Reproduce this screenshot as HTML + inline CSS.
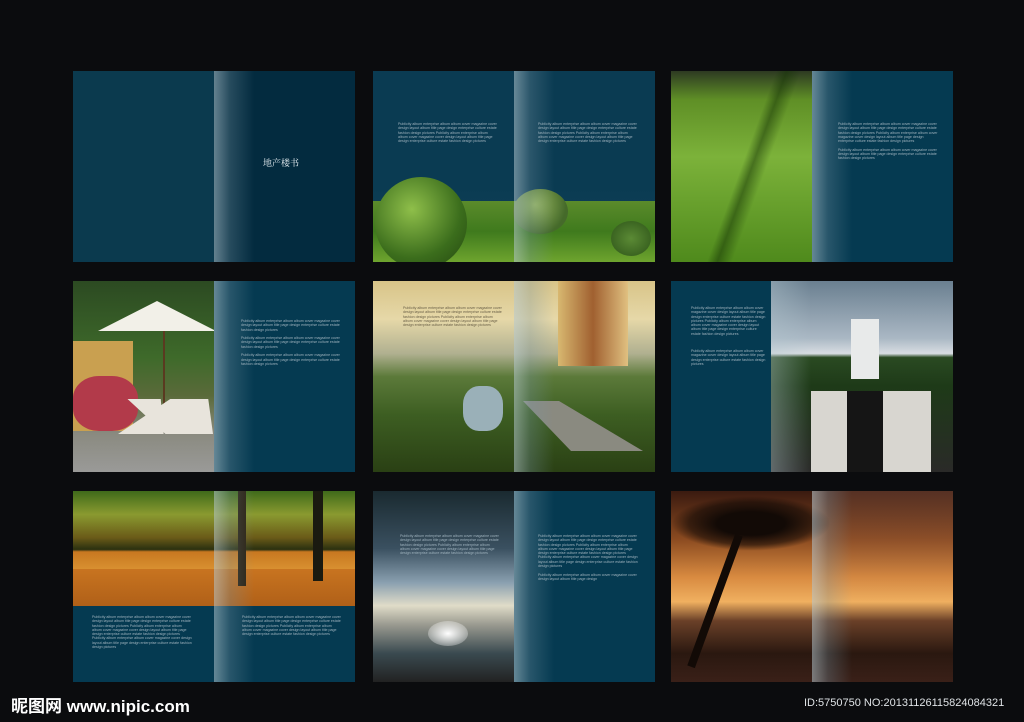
<!DOCTYPE html>
<html><head><meta charset="utf-8"><style>
body{margin:0;width:1024px;height:722px;background:#0b0c0e;position:relative;overflow:hidden;font-family:"Liberation Sans",sans-serif}
.s{position:absolute;width:282px;height:191px;overflow:hidden;background:#053047}
.a{position:absolute}
.fold{position:absolute;left:141px;top:0;width:40px;height:100%;background:linear-gradient(90deg,rgba(180,200,208,.55),rgba(120,150,165,.3) 40%,rgba(0,0,0,0))}
.t{position:absolute;font-size:3.6px;line-height:4.3px;color:#9fb2bd;width:100px;white-space:normal}
</style></head><body>

<!-- row 1 -->
<div class="s" style="left:73px;top:71px">
 <div class="a" style="left:0;top:0;width:141px;height:191px;background:#0b3a4e"></div>
 <div class="a" style="left:141px;top:0;width:141px;height:191px;background:#032b3f"></div>
 <div class="fold"></div>
 <div class="a" style="left:190px;top:85px;color:#e6eef2;font-size:9px;font-family:'Liberation Serif','Noto Serif CJK SC',serif">地产楼书</div>
</div>

<div class="s" style="left:373px;top:71px">
 <div class="a" style="left:0;top:0;width:282px;height:191px;background:linear-gradient(180deg,#0a3b52 0,#0a3b52 60%,#12405a 100%)"></div>
 <div class="a" style="left:0;top:130px;width:282px;height:61px;background:linear-gradient(180deg,#5b8b2b,#3f7a1d 50%,#6ea42e)"></div>
 <div class="a" style="left:2px;top:106px;width:92px;height:92px;border-radius:50%;background:radial-gradient(circle at 40% 35%,#8fbf4a,#3b6d1c 60%,#234510)"></div>
 <div class="a" style="left:140px;top:118px;width:55px;height:45px;border-radius:50%;background:radial-gradient(circle at 40% 35%,#9ab860,#456a2a 70%)"></div>
 <div class="a" style="left:238px;top:150px;width:40px;height:35px;border-radius:50%;background:radial-gradient(#5b8a35,#2d5418)"></div>
 <div class="fold"></div>
 <div class="t" style="left:25px;top:51px">Publicity album enterprise album album cover magazine cover design layout album title page design enterprise culture estate fashion design pictures Publicity album enterprise album album cover magazine cover design layout album title page design enterprise culture estate fashion design pictures</div>
 <div class="t" style="left:165px;top:51px">Publicity album enterprise album album cover magazine cover design layout album title page design enterprise culture estate fashion design pictures Publicity album enterprise album album cover magazine cover design layout album title page design enterprise culture estate fashion design pictures</div>
</div>

<div class="s" style="left:671px;top:71px">
 <div class="a" style="left:0;top:0;width:141px;height:191px;background:linear-gradient(180deg,#2d3a22 0,#5f8f26 15%,#7cb23a 45%,#4f8a1c 100%)"></div>
 <div class="a" style="left:0;top:0;width:141px;height:191px;background:linear-gradient(110deg,rgba(0,0,0,0) 50%,rgba(20,50,5,.5) 55%,rgba(0,0,0,0) 62%)"></div>
 <div class="a" style="left:141px;top:0;width:141px;height:191px;background:#053a51"></div>
 <div class="fold"></div>
 <div class="t" style="left:167px;top:51px">Publicity album enterprise album album cover magazine cover design layout album title page design enterprise culture estate fashion design pictures Publicity album enterprise album cover magazine cover design layout album title page design enterprise culture estate fashion design pictures<br><br>Publicity album enterprise album album cover magazine cover design layout album title page design enterprise culture estate fashion design pictures</div>
</div>

<!-- row 2 -->
<div class="s" style="left:73px;top:281px">
 <div class="a" style="left:0;top:0;width:141px;height:191px;background:linear-gradient(180deg,#2c4a22 0,#3e6a2a 40%,#5a6a3a 60%,#8a8a80 80%,#9a9a98 100%)"></div>
 <div class="a" style="left:0;top:60px;width:60px;height:90px;background:#c9a050"></div>
 <div class="a" style="left:0;top:95px;width:65px;height:55px;border-radius:40%;background:#b23a4a"></div>
 <div class="a" style="left:25px;top:20px;width:118px;height:30px;background:#f2f0e8;clip-path:polygon(50% 0,100% 100%,0 100%)"></div>
 <div class="a" style="left:90px;top:50px;width:2px;height:80px;background:#5a3a20"></div>
 <div class="a" style="left:45px;top:118px;width:95px;height:35px;background:#e8e4dc;clip-path:polygon(10% 0,45% 0,48% 100%,0 100%,55% 0,95% 0,100% 100%,50% 100%)"></div>
 <div class="a" style="left:141px;top:0;width:141px;height:191px;background:#053a51"></div>
 <div class="fold"></div>
 <div class="t" style="left:168px;top:38px">Publicity album enterprise album album cover magazine cover design layout album title page design enterprise culture estate fashion design pictures<br><br>Publicity album enterprise album album cover magazine cover design layout album title page design enterprise culture estate fashion design pictures<br><br>Publicity album enterprise album album cover magazine cover design layout album title page design enterprise culture estate fashion design pictures</div>
</div>

<div class="s" style="left:373px;top:281px">
 <div class="a" style="left:0;top:0;width:282px;height:191px;background:linear-gradient(180deg,#d8c488 0,#e6d8a8 20%,#b0b090 38%,#5c7a3a 50%,#3d5e22 70%,#2a4014 100%)"></div>
 <div class="a" style="left:185px;top:0;width:70px;height:85px;background:linear-gradient(90deg,#d8b870,#a06030 50%,#e0c080)"></div>
 <div class="a" style="left:90px;top:105px;width:40px;height:45px;background:#9ab0b8;border-radius:40%"></div>
 <div class="a" style="left:150px;top:120px;width:120px;height:50px;background:#8a8a80;clip-path:polygon(0 0,30% 0,100% 100%,40% 100%)"></div>
 <div class="fold"></div>
 <div class="t" style="left:30px;top:25px;color:#6a6048">Publicity album enterprise album album cover magazine cover design layout album title page design enterprise culture estate fashion design pictures Publicity album enterprise album album cover magazine cover design layout album title page design enterprise culture estate fashion design pictures</div>
</div>

<div class="s" style="left:671px;top:281px">
 <div class="a" style="left:0;top:0;width:100px;height:191px;background:#053a51"></div>
 <div class="a" style="left:100px;top:0;width:182px;height:191px;background:linear-gradient(180deg,#6a7f90 0,#aab8c4 30%,#d8dde2 38%,#2a4a22 40%,#1e3a18 55%,#2a2a28 100%)"></div>
 <div class="a" style="left:140px;top:110px;width:120px;height:81px;background:linear-gradient(90deg,#d8d6d0 0,#d8d6d0 30%,#151515 30%,#151515 60%,#d8d6d0 60%,#d8d6d0 100%)"></div>
 <div class="a" style="left:180px;top:38px;width:28px;height:60px;background:#e8eaea"></div>
 <div class="a" style="left:100px;top:0;width:40px;height:191px;background:linear-gradient(90deg,rgba(180,200,208,.4),rgba(0,0,0,0))"></div>
 <div class="t" style="left:20px;top:25px;width:75px">Publicity album enterprise album album cover magazine cover design layout album title page design enterprise culture estate fashion design pictures Publicity album enterprise album album cover magazine cover design layout album title page design enterprise culture estate fashion design pictures<br><br><br><br>Publicity album enterprise album album cover magazine cover design layout album title page design enterprise culture estate fashion design pictures</div>
</div>

<!-- row 3 -->
<div class="s" style="left:73px;top:491px">
 <div class="a" style="left:0;top:0;width:282px;height:78px;background:linear-gradient(180deg,#3f6a1a 0,#8a9a30 30%,#6a5a18 60%,#2a3010 75%,#c87820 78%,#d89030 100%)"></div>
 <div class="a" style="left:0;top:78px;width:282px;height:37px;background:linear-gradient(180deg,#c87420,#b06018)"></div>
 <div class="a" style="left:0;top:115px;width:282px;height:76px;background:#053a51"></div>
 <div class="a" style="left:240px;top:0;width:10px;height:90px;background:#1a1a10"></div>
 <div class="a" style="left:165px;top:0;width:8px;height:95px;background:#2a2010"></div>
 <div class="fold"></div>
 <div class="t" style="left:19px;top:124px">Publicity album enterprise album album cover magazine cover design layout album title page design enterprise culture estate fashion design pictures Publicity album enterprise album album cover magazine cover design layout album title page design enterprise culture estate fashion design pictures Publicity album enterprise album cover magazine cover design layout album title page design enterprise culture estate fashion design pictures</div>
 <div class="t" style="left:169px;top:124px">Publicity album enterprise album album cover magazine cover design layout album title page design enterprise culture estate fashion design pictures Publicity album enterprise album album cover magazine cover design layout album title page design enterprise culture estate fashion design pictures</div>
</div>

<div class="s" style="left:373px;top:491px">
 <div class="a" style="left:0;top:0;width:141px;height:191px;background:linear-gradient(180deg,#1a2a30 0,#3a5060 30%,#8aa0b0 48%,#e0dcc8 60%,#9a9a90 70%,#3a4a50 85%,#222 100%)"></div>
 <div class="a" style="left:55px;top:130px;width:40px;height:25px;border-radius:50%;background:radial-gradient(#ffffff,rgba(255,255,255,0))"></div>
 <div class="a" style="left:141px;top:0;width:141px;height:191px;background:#053a51"></div>
 <div class="fold"></div>
 <div class="t" style="left:27px;top:43px">Publicity album enterprise album album cover magazine cover design layout album title page design enterprise culture estate fashion design pictures Publicity album enterprise album album cover magazine cover design layout album title page design enterprise culture estate fashion design pictures</div>
 <div class="t" style="left:165px;top:43px">Publicity album enterprise album album cover magazine cover design layout album title page design enterprise culture estate fashion design pictures Publicity album enterprise album album cover magazine cover design layout album title page design enterprise culture estate fashion design pictures Publicity album enterprise album cover magazine cover design layout album title page design enterprise culture estate fashion design pictures<br><br>Publicity album enterprise album album cover magazine cover design layout album title page design</div>
</div>

<div class="s" style="left:671px;top:491px">
 <div class="a" style="left:0;top:0;width:282px;height:191px;background:linear-gradient(180deg,#3a1a10 0,#8a4a20 25%,#d88a40 45%,#f0b060 58%,#6a4028 68%,#2a1810 85%,#3a2018 100%)"></div>
 <div class="a" style="left:141px;top:0;width:141px;height:191px;background:linear-gradient(180deg,rgba(150,100,80,.3),rgba(0,0,0,0) 60%)"></div>
 <div class="a" style="left:40px;top:40px;width:8px;height:140px;background:#120a06;transform:rotate(20deg)"></div>
 <div class="a" style="left:0;top:5px;width:160px;height:55px;border-radius:50%;background:radial-gradient(ellipse,#120a06 30%,rgba(18,10,6,.6) 55%,rgba(0,0,0,0) 70%)"></div>
 <div class="fold"></div>
</div>

<div class="a" style="left:11px;top:692px;color:#fff;font-size:17px;font-weight:bold;font-family:'Liberation Sans','Noto Sans CJK SC',sans-serif">昵图网 www.nipic.com</div>
<div class="a" style="left:804px;top:697px;color:#dfe3e6;font-size:11px">ID:5750750 NO:20131126115824084321</div>
</body></html>
